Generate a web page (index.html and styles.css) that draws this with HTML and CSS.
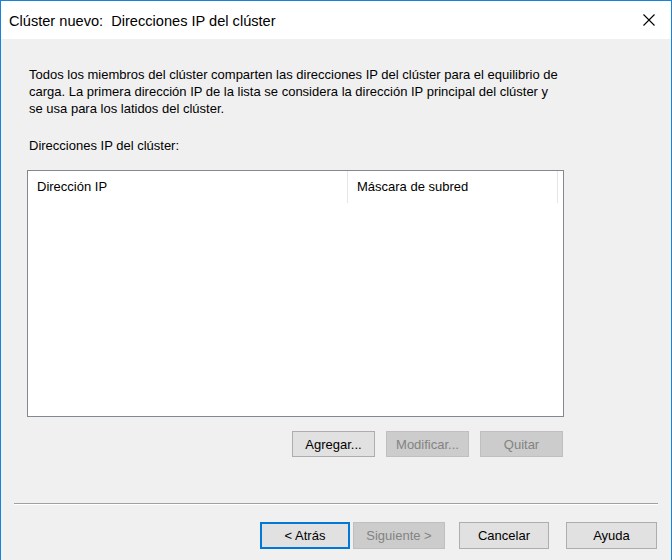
FILE: index.html
```html
<html>

<head>
    <link rel="stylesheet" href="styles.css">
</head>

<body>
    <div class="window">
        <div class="titlebar">
            <span class="title">Clúster nuevo:&nbsp; Direcciones IP del clúster</span>
            <svg class="close" width="12" height="12" viewBox="0 0 12 12">
                <path d="M0.5 0.5 L11.5 11.5 M11.5 0.5 L0.5 11.5" stroke="#000" stroke-width="1.1" fill="none" />
            </svg>
        </div>
        <div class="body">
            <div class="page">
                <p class="intro">
                    Todos los miembros del clúster comparten las direcciones IP del clúster para el equilibrio de<br>
                    carga. La primera dirección IP de la lista se considera la dirección IP principal del clúster y<br>
                    se usa para los latidos del clúster.
                </p>
                <div class="label">Direcciones IP del clúster:</div>
                <div class="listview">
                    <div class="list-header">
                        <div class="col col-ip">Dirección IP</div>
                        <div class="col col-mask">Máscara de subred</div>
                    </div>
                </div>
                <div class="actions">
                    <button class="btn">Agregar...</button>
                    <button class="btn" disabled>Modificar...</button>
                    <button class="btn" disabled>Quitar</button>
                </div>
            </div>
            <div class="divider"></div>
            <div class="nav">
                <button class="btn nav-btn focused">&lt; Atrás</button>
                <button class="btn nav-btn next" disabled>Siguiente &gt;</button>
                <button class="btn nav-btn cancel">Cancelar</button>
                <button class="btn nav-btn help">Ayuda</button>
            </div>
        </div>
    </div>
</body>

</html>
```

FILE: styles.css
```css
body {
    margin: 0;
    font-family: "Liberation Sans", Arial, sans-serif;
    font-size: 13px;
    color: #000;
}

.window {
    width: 672px;
    height: 560px;
    box-sizing: border-box;
    border: 1px solid #1883d7;
    border-bottom: none;
    display: flex;
    flex-direction: column;
    background: #f0f0f0;
    overflow: hidden;
}

.titlebar {
    height: 38px;
    background: #fff;
    display: flex;
    align-items: center;
    justify-content: space-between;
    padding: 0 16px 0 8px;
    flex-shrink: 0;
}

.title {
    font-size: 14.6px;
    margin-top: 1px;
}

.close {
    display: block;
}

.body {
    flex: 1;
    background: #f0f0f0;
}

.page {
    padding-left: 26px;
}

.intro {
    margin: 27px 0 0 2px;
    line-height: 17px;
}

.label {
    margin: 20px 0 0 2px;
    line-height: 17px;
}

.listview {
    margin-top: 16px;
    width: 537px;
    height: 247px;
    box-sizing: border-box;
    border: 1px solid #828790;
    background: #fff;
}

.list-header {
    display: flex;
    height: 32px;
}

.col {
    box-sizing: border-box;
    padding: 8px 0 0 9px;
    border-right: 1px solid #e5e5e5;
}

.col-ip {
    width: 320px;
}

.col-mask {
    width: 210px;
}

.actions {
    width: 537px;
    margin-top: 14px;
    display: flex;
    justify-content: flex-end;
    gap: 11px;
    padding-right: 1px;
    box-sizing: border-box;
}

.btn {
    width: 83px;
    height: 26px;
    padding: 0;
    font-family: inherit;
    font-size: 13px;
    color: #000;
    background: #e1e1e1;
    border: 1px solid #adadad;
    border-radius: 0;
}

.btn:disabled {
    background: #cccccc;
    border-color: #bfbfbf;
    color: #838383;
}

.divider {
    margin: 46px 13px 0 13px;
    border-top: 1px solid #a0a0a0;
    border-bottom: 1px solid #fff;
}

.nav {
    margin-top: 17px;
    display: flex;
    justify-content: flex-end;
    padding-right: 14px;
}

.nav-btn {
    width: 90px;
    height: 27px;
}

.focused {
    border: 2px solid #0078d7;
}

.next {
    width: 92px;
    margin-left: 3px;
}

.cancel {
    margin-left: 14px;
}

.help {
    width: 91px;
    margin-left: 17px;
}
```
